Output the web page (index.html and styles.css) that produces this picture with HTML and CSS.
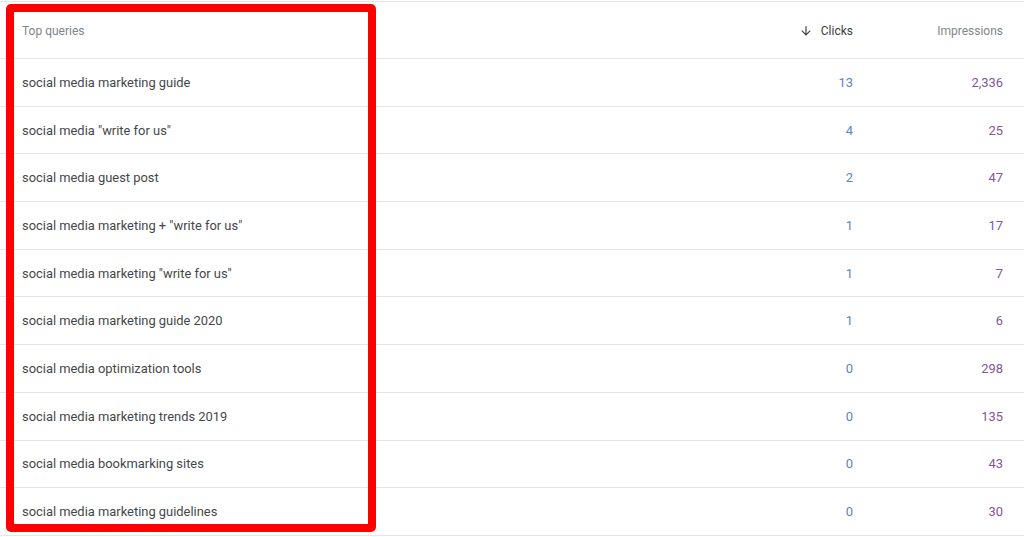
FILE: index.html
```html
<!DOCTYPE html>
<html lang="en">
<head>
    <meta charset="UTF-8">
    <meta name="viewport" content="width=device-width, initial-scale=1.0">
    <title>Top queries</title>
    <link rel="stylesheet" href="styles.css">
</head>
<body>
    <div class="report">
        <div class="row head">
            <div class="cell query">Top queries</div>
            <div class="cell num sorted">
                <svg class="sort-icon" viewBox="0 0 24 24" width="14" height="14"><path d="M20 12l-1.41-1.41L13 16.17V4h-2v12.17l-5.58-5.59L4 12l8 8 8-8z"/></svg>
                Clicks
            </div>
            <div class="cell num">Impressions</div>
        </div>

        <div class="row"><div class="cell query">social media marketing guide</div><div class="cell num clicks">13</div><div class="cell num impr">2,336</div></div>
        <div class="row"><div class="cell query">social media "write for us"</div><div class="cell num clicks">4</div><div class="cell num impr">25</div></div>
        <div class="row"><div class="cell query">social media guest post</div><div class="cell num clicks">2</div><div class="cell num impr">47</div></div>
        <div class="row"><div class="cell query">social media marketing + "write for us"</div><div class="cell num clicks">1</div><div class="cell num impr">17</div></div>
        <div class="row"><div class="cell query">social media marketing "write for us"</div><div class="cell num clicks">1</div><div class="cell num impr">7</div></div>
        <div class="row"><div class="cell query">social media marketing guide 2020</div><div class="cell num clicks">1</div><div class="cell num impr">6</div></div>
        <div class="row"><div class="cell query">social media optimization tools</div><div class="cell num clicks">0</div><div class="cell num impr">298</div></div>
        <div class="row"><div class="cell query">social media marketing trends 2019</div><div class="cell num clicks">0</div><div class="cell num impr">135</div></div>
        <div class="row"><div class="cell query">social media bookmarking sites</div><div class="cell num clicks">0</div><div class="cell num impr">43</div></div>
        <div class="row"><div class="cell query">social media marketing guidelines</div><div class="cell num clicks">0</div><div class="cell num impr">30</div></div>

        <div class="highlight"></div>
    </div>
</body>
</html>
```

FILE: styles.css
```css
*{
    margin: 0px;
    padding: 0px;
    box-sizing: border-box;
}

body{
    font-family: Roboto, "Liberation Sans", Arial, sans-serif;
    background-color: #FFF;
    color: #44474a;
}

.report{
    position: relative;
    padding-top: 1px;
}

.row{
    display: flex;
    align-items: center;
    height: 47.7px;
    border-bottom: 1px solid #e6e6e6;
    font-size: 12.9px;
}

.head{
    height: 58px;
    padding-top: 2px;
    border-top: 1px solid #e6e6e6;
    font-size: 12px;
    color: #80868b;
}

.cell.query{
    flex: 1;
    padding-left: 22px;
}

.cell.num{
    width: 150px;
    text-align: right;
}

.cell.num:last-child{
    margin-right: 21px;
}

.sorted{
    display: flex;
    justify-content: flex-end;
    align-items: center;
    gap: 8px;
    color: #3c4043;
}

.sort-icon{
    fill: #3c4043;
}

.clicks{
    color: #5b82c9;
}

.impr{
    color: #82559f;
}

.highlight{
    position: absolute;
    left: 6px;
    top: 4px;
    width: 370px;
    height: 528px;
    border: 8px solid #ff0000;
    border-radius: 5px;
    pointer-events: none;
}
```
